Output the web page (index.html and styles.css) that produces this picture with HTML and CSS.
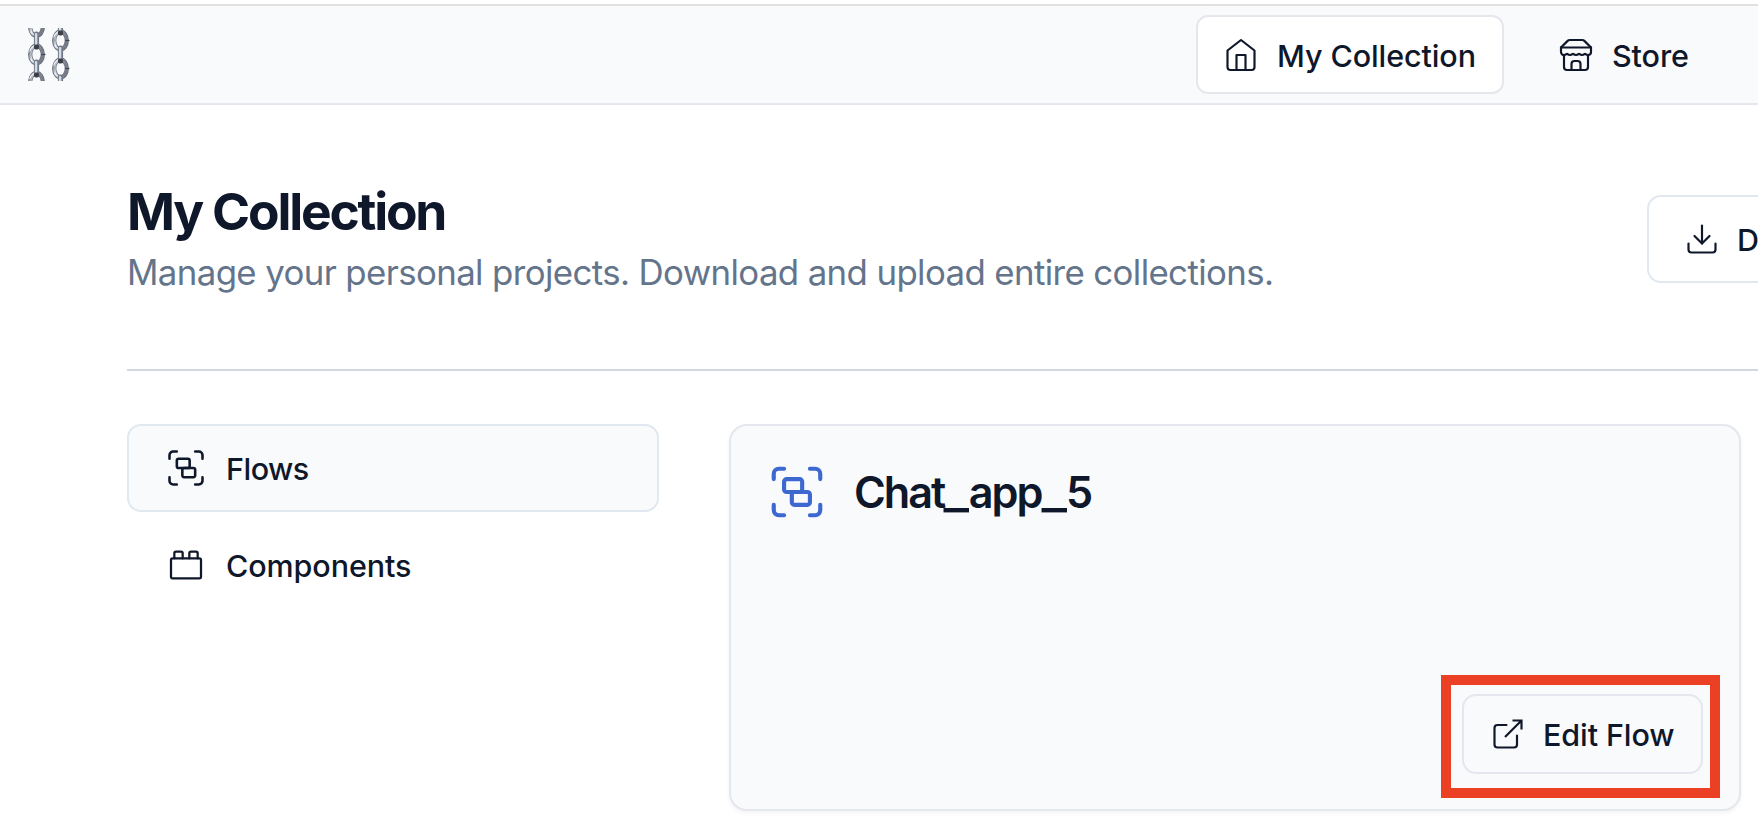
FILE: index.html
```html
<!DOCTYPE html>
<html lang="en">
<head>
<meta charset="utf-8">
<title>My Collection</title>
<link rel="stylesheet" href="styles.css">
</head>
<body>
<svg class="defs" width="0" height="0">
  <defs>
    <linearGradient id="steel" x1="0" x2="1" y1="0" y2="0.3">
      <stop offset="0" stop-color="#7d838f"/><stop offset="0.3" stop-color="#d3dae4"/><stop offset="0.6" stop-color="#8e95a1"/><stop offset="1" stop-color="#777c86"/>
    </linearGradient>
    <g id="link">
      <ellipse rx="6.3" ry="8.8" fill="none" stroke="#656a76" stroke-width="4.2"/>
      <ellipse rx="6.3" ry="8.8" fill="none" stroke="url(#steel)" stroke-width="2.8"/>
      <path d="M-6.6 -3Q-6 -7 -2 -8.6M-5.8 4Q-4 8 0 8.5" fill="none" stroke="#eef3f8" stroke-width="1.2"/>
      <path d="M4.5 0h4.5" stroke="#45484f" stroke-width="1.2"/>
    </g>
    <g id="bar">
      <rect x="-2.6" y="-7.5" width="5.2" height="15" rx="2.4" fill="#737985"/>
      <rect x="-1.6" y="-6" width="2.4" height="12" rx="1" fill="#d3deeb"/>
      <rect x="-2.6" y="5.5" width="5.2" height="5" rx="2" fill="#3d3f46"/>
    </g>
    <g id="group">
      <path d="M3 7V5c0-1.1.9-2 2-2h2M17 3h2c1.1 0 2 .9 2 2v2M21 17v2c0 1.1-.9 2-2 2h-2M7 21H5c-1.1 0-2-.9-2-2v-2"/>
      <rect width="7" height="5" x="7" y="7" rx="1"/><rect width="7" height="5" x="10" y="12" rx="1"/>
    </g>
  </defs>
</svg>
<header class="header">
  <svg class="logo" width="43" height="53" viewBox="0 0 43 53">
    <use href="#link" x="8.5" y="-1"/><use href="#link" x="8.5" y="26.5"/><use href="#link" x="8.5" y="54"/>
    <use href="#bar" x="8.5" y="11"/><use href="#bar" x="8.5" y="39"/>
    <use href="#link" x="32.5" y="12.5"/><use href="#link" x="32.5" y="40.5"/>
    <use href="#bar" x="32.5" y="-3"/><use href="#bar" x="32.5" y="25"/><use href="#bar" x="32.5" y="54"/>
  </svg>
  <nav class="nav">
    <a class="tab tab-active">
      <svg class="icon" viewBox="0 0 24 24"><path d="m3 9 9-7 9 7v11a2 2 0 0 1-2 2H5a2 2 0 0 1-2-2z"/><path d="M9 22V12h6v10"/></svg>
      <span class="label">My Collection</span>
    </a>
    <a class="tab">
      <svg class="icon" viewBox="0 0 24 24"><path d="m2 7 4.41-4.41A2 2 0 0 1 7.83 2h8.34a2 2 0 0 1 1.42.59L22 7"/><path d="M4 12v8a2 2 0 0 0 2 2h12a2 2 0 0 0 2-2v-8"/><path d="M15 22v-4a2 2 0 0 0-2-2h-2a2 2 0 0 0-2 2v4"/><path d="M2 7h20"/><path d="M22 7v3a2 2 0 0 1-2 2a2.7 2.7 0 0 1-1.59-.63.7.7 0 0 0-.82 0A2.7 2.7 0 0 1 16 12a2.7 2.7 0 0 1-1.59-.63.7.7 0 0 0-.82 0A2.7 2.7 0 0 1 12 12a2.7 2.7 0 0 1-1.59-.63.7.7 0 0 0-.82 0A2.7 2.7 0 0 1 8 12a2.7 2.7 0 0 1-1.59-.63.7.7 0 0 0-.82 0A2.7 2.7 0 0 1 4 12a2 2 0 0 1-2-2V7"/></svg>
      <span class="label">Store</span>
    </a>
  </nav>
</header>
<main class="main">
  <section class="intro">
    <div class="intro-text">
      <h1 class="title">My Collection</h1>
      <p class="subtitle">Manage your personal projects. Download and upload entire collections.</p>
    </div>
    <button class="download">
      <svg class="icon" viewBox="0 0 24 24"><path d="M21 15v4a2 2 0 0 1-2 2H5a2 2 0 0 1-2-2v-4"/><path d="m7 10 5 5 5-5"/><path d="M12 15V3"/></svg>
      <span class="label">D</span>
    </button>
  </section>
  <section class="content">
    <aside class="sidebar">
      <a class="side side-active">
        <svg class="icon icon-group" viewBox="0 0 24 24"><use href="#group"/></svg>
        <span class="label label-flows">Flows</span>
      </a>
      <a class="side">
        <svg class="icon icon-brick" viewBox="0 0 24 24"><rect width="18" height="12" x="3" y="8" rx="1"/><path d="M10 8V5c0-.6-.4-1-1-1H6a1 1 0 0 0-1 1v3M19 8V5c0-.6-.4-1-1-1h-3a1 1 0 0 0-1 1v3"/></svg>
        <span class="label">Components</span>
      </a>
    </aside>
    <article class="card">
      <div class="card-head">
        <svg class="icon icon-card" viewBox="0 0 24 24"><use href="#group"/></svg>
        <h2 class="card-title">Chat<span class="underscore">_</span>app<span class="underscore">_</span>5</h2>
      </div>
      <button class="edit">
        <svg class="icon" viewBox="0 0 24 24"><path d="M18 13v6a2 2 0 0 1-2 2H5a2 2 0 0 1-2-2V8a2 2 0 0 1 2-2h6"/><path class="arrow" d="M15 3h6v6M10 14 21 3"/></svg>
        <span class="label">Edit Flow</span>
      </button>
      <div class="highlight"></div>
    </article>
  </section>
</main>
</body>
</html>
```

FILE: styles.css
```css
* { box-sizing: border-box; }
body { margin: 0; width: 1758px; height: 832px; overflow: hidden; background: #fff; color: #0f172a; font-family: Inter, "Liberation Sans", sans-serif; }
h1, h2, p { margin: 0; }
button { font: inherit; color: inherit; margin: 0; }
.defs { display: block; }
.header { margin-top: 4px; height: 101px; border-top: 2px solid #e1e1e1; border-bottom: 2px solid #e5e7ee; background: #f9fafc; display: flex; align-items: flex-start; justify-content: space-between; padding: 0 48px 0 28px; }
.logo { margin-top: 22px; overflow: hidden; }
.nav { display: flex; gap: 24px; padding-top: 9px; }
.tab { height: 79px; display: flex; align-items: center; gap: 18px; padding: 1px 25px 0 25px; border: 2px solid transparent; border-radius: 12px; white-space: nowrap; }
.tab:last-child { width: 182px; padding-left: 28px; padding-right: 0; }
.tab-active { width: 308px; background: #fff; border-color: #e5e7ec; }
.icon { width: 36px; height: 36px; flex: none; fill: none; stroke: #0f172a; stroke-width: 1.45; stroke-linecap: round; stroke-linejoin: round; }
.label { padding-top: 2px; font-size: 30.5px; font-weight: 500; line-height: 44px; letter-spacing: -0.1px; white-space: nowrap; }
.label-flows { letter-spacing: -0.5px; }
.main { padding-left: 127px; }
.intro { height: 266px; border-bottom: 2px solid #d1d8e1; display: flex; justify-content: space-between; align-items: flex-start; }
.intro-text { padding-top: 76px; }
.title { font-size: 51.5px; line-height: 60px; font-weight: 700; letter-spacing: -2.2px; white-space: nowrap; }
.subtitle { margin-top: 5px; font-size: 34.8px; line-height: 52px; letter-spacing: -0.61px; color: #64748b; white-space: nowrap; }
.download { width: 111px; height: 88px; margin-top: 90px; display: flex; align-items: center; gap: 17px; padding: 0 0 0 35px; border: 2px solid #e2e8f0; border-right: 0; border-radius: 14px 0 0 14px; background: #fff; flex: none; overflow: hidden; }
.content { padding-top: 53px; display: flex; gap: 70px; align-items: flex-start; }
.sidebar { width: 532px; display: flex; flex-direction: column; gap: 9px; }
.side { height: 88px; display: flex; align-items: center; padding-left: 35px; gap: 18px; border: 2px solid transparent; border-radius: 14px; }
.side-active { background: #f9fafc; border-color: #e2e8f0; }
.icon-group { width: 44px; height: 44px; stroke-width: 1.4; }
.icon-brick { width: 40px; height: 40px; margin: 0 2px; stroke-width: 1.35; }
.card { position: relative; width: 1012px; height: 387px; border: 2px solid #e5e7ee; border-radius: 18px; background: #f9fafc; box-shadow: 0 2px 4px rgba(15, 23, 42, .05); display: flex; flex-direction: column; justify-content: space-between; padding: 35px 36px 35px 35px; }
.card-head { display: flex; align-items: center; gap: 26px; }
.icon-card { width: 62px; height: 62px; stroke: #3c68cf; stroke-width: 1.6; }
.card-title { font-size: 43.2px; line-height: 60px; font-weight: 600; letter-spacing: -2px; }
.underscore { display: inline-block; width: 24.5px; transform: scaleX(1.26); transform-origin: 2px 50%; }
.edit { align-self: flex-end; width: 241px; height: 80px; display: flex; align-items: center; gap: 17px; padding: 0 0 0 26px; border: 2px solid #e5e7ee; border-radius: 14px; background: #f9fafc; }
.arrow { stroke-linecap: butt; stroke-linejoin: miter; }
.highlight { position: absolute; left: 710px; top: 249px; width: 279px; height: 123px; border: 10px solid #ec4025; pointer-events: none; }
```
